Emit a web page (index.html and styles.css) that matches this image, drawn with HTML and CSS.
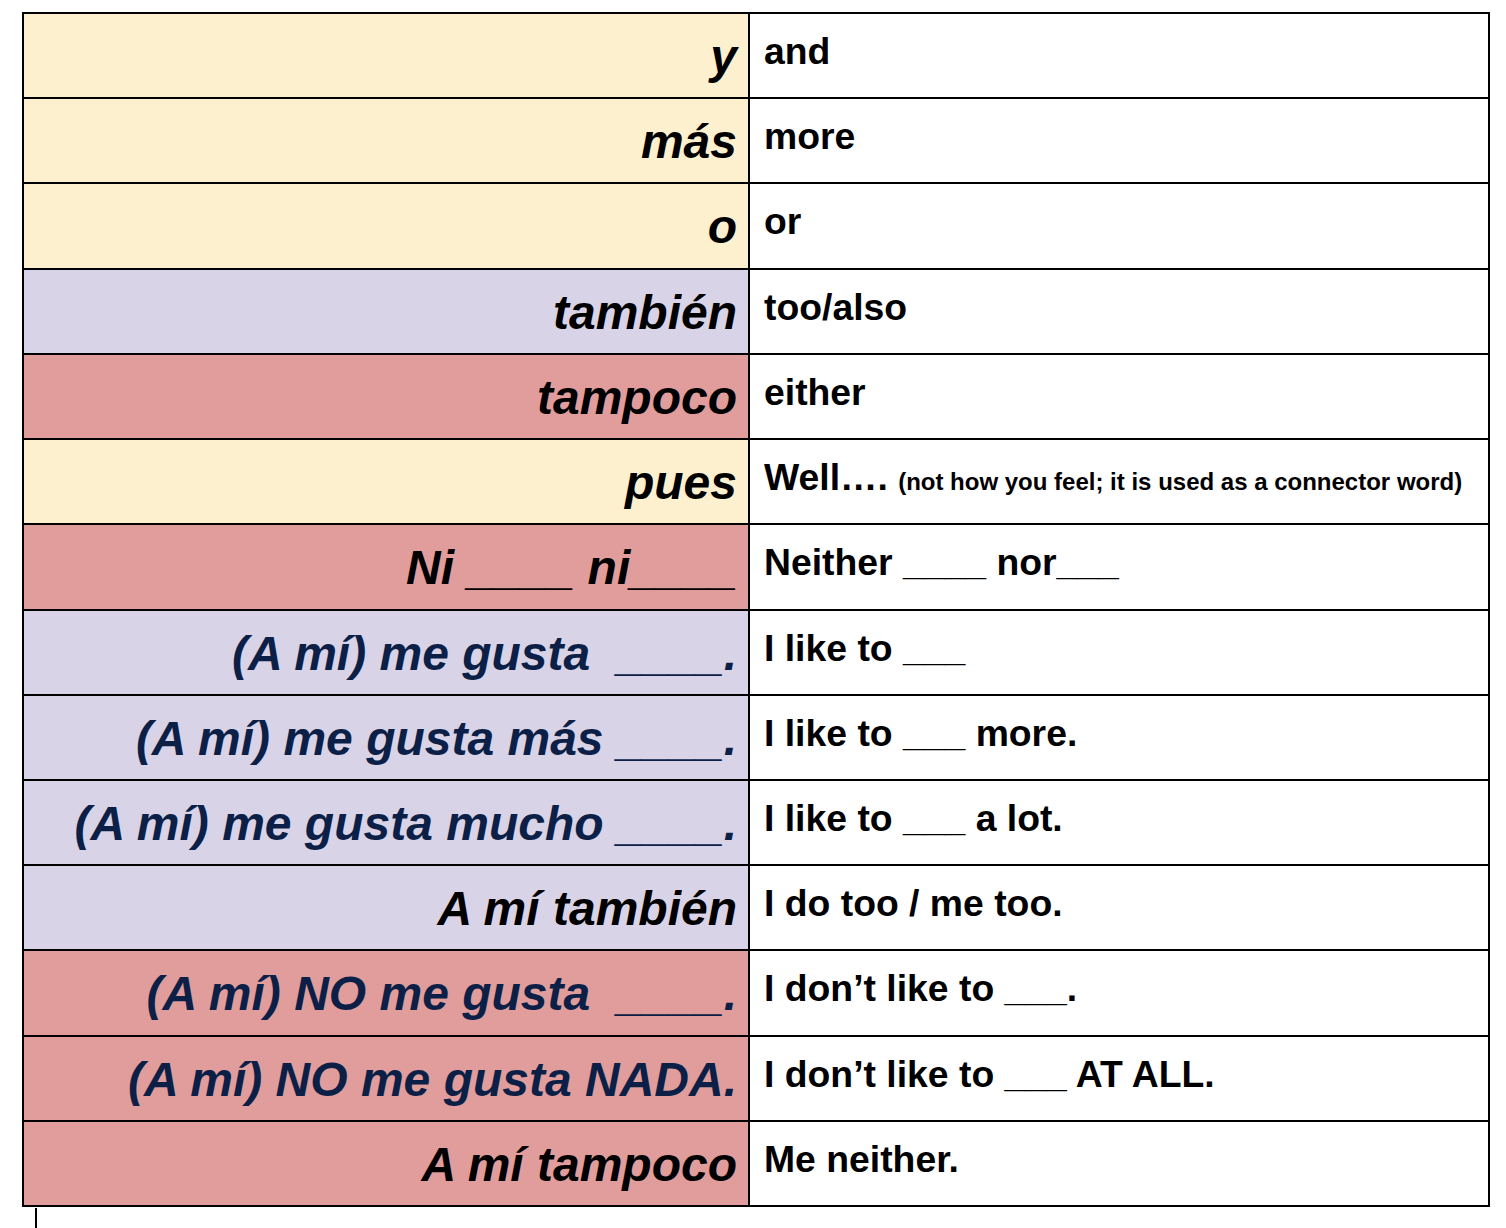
FILE: index.html
```html
<!DOCTYPE html>
<html lang="es">
<head>
<meta charset="utf-8">
<title>Vocabulario</title>
<link rel="stylesheet" href="styles.css">
</head>
<body>
<div class="sheet">
  <div class="term yellow">y</div><div class="meaning">and</div>
  <div class="term yellow">más</div><div class="meaning">more</div>
  <div class="term yellow">o</div><div class="meaning">or</div>
  <div class="term purple">también</div><div class="meaning">too/also</div>
  <div class="term red">tampoco</div><div class="meaning">either</div>
  <div class="term yellow">pues</div><div class="meaning">Well…. <span class="note">(not how you feel; it is used as a connector word)</span></div>
  <div class="term red">Ni ____ ni____</div><div class="meaning">Neither ____ nor___</div>
  <div class="term purple navy">(A mí) me gusta  ____.</div><div class="meaning">I like to ___</div>
  <div class="term purple navy">(A mí) me gusta más ____.</div><div class="meaning">I like to ___ more.</div>
  <div class="term purple navy">(A mí) me gusta mucho ____.</div><div class="meaning">I like to ___ a lot.</div>
  <div class="term purple">A mí también</div><div class="meaning">I do too / me too.</div>
  <div class="term red navy">(A mí) NO me gusta  ____.</div><div class="meaning">I don’t like to ___.</div>
  <div class="term red navy">(A mí) NO me gusta NADA.</div><div class="meaning">I don’t like to ___ AT ALL.</div>
  <div class="term red">A mí tampoco</div><div class="meaning">Me neither.</div>
</div>
<div class="caret"></div>
</body>
</html>
```
FILE: styles.css
```css
html, body {
  margin: 0;
  padding: 0;
  background: #ffffff;
}

body {
  padding: 12px 0 0 22px;
  font-family: "Liberation Sans", Arial, sans-serif;
  color: #000000;
}

.sheet {
  width: 1468px;
  height: 1195px;
  box-sizing: border-box;
  padding: 2px;
  background: #000000;
  display: grid;
  grid-template-columns: 724px 738px;
  grid-template-rows: repeat(14, 1fr);
  gap: 2px;
}

.term {
  font-size: 48px;
  font-weight: bold;
  font-style: italic;
  text-align: right;
  white-space: pre;
  padding: 15px 11px 0 0;
  overflow: hidden;
}

.meaning {
  background: #ffffff;
  font-size: 37.33px;
  font-weight: bold;
  padding: 16px 0 0 14px;
  white-space: pre;
  overflow: hidden;
}

.note {
  font-size: 24px;
}

.yellow { background: #fcf0cf; }
.purple { background: #d9d3e8; }
.red { background: #e09d9c; }
.navy { color: #0c1f47; }

.caret {
  width: 2px;
  height: 21px;
  margin: 1px 0 0 13px;
  background: #000000;
}
```
